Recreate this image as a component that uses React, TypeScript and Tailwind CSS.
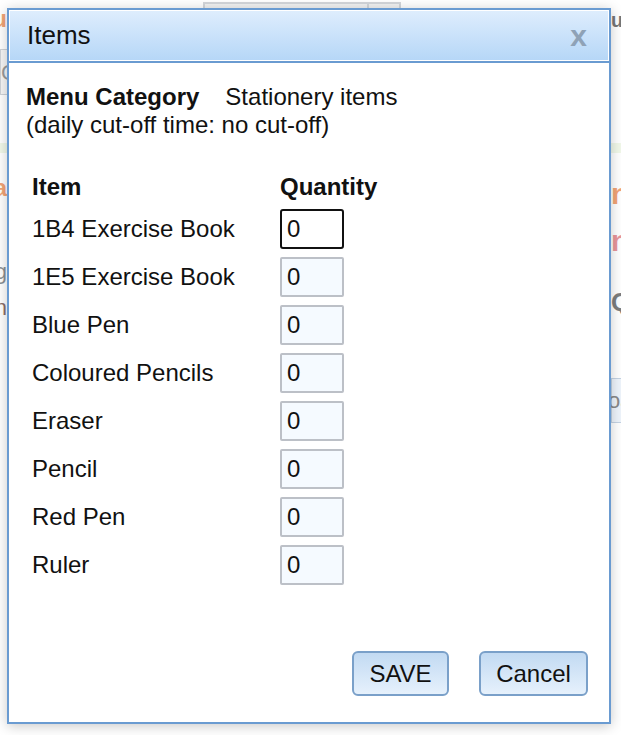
import React from 'react';

const items = [
  '1B4 Exercise Book',
  '1E5 Exercise Book',
  'Blue Pen',
  'Coloured Pencils',
  'Eraser',
  'Pencil',
  'Red Pen',
  'Ruler',
];

const font = { fontFamily: '"Liberation Sans", Arial, sans-serif' };

function PageBehind() {
  return (
    <div className="flex h-full w-full">
      {/* left edge of the page */}
      <div className="flex w-[7px] shrink-0 flex-col items-end overflow-hidden">
        <div className="flex h-[38px] items-center whitespace-nowrap text-[24px] font-bold leading-none text-[#f2a476]">
          Menu
        </div>
        <div className="mt-[11px] flex h-[46px] w-[40px] shrink-0 items-center self-start border border-[#cfd3d8] bg-[#f6f6f6] text-[22px] text-[#9a9a9a]">
          C
        </div>
        <div className="mt-[48px] h-[10px] w-full shrink-0 bg-[#f1f8e9]" />
        <div className="mt-[20px] flex h-[30px] items-center whitespace-nowrap text-[24px] font-bold text-[#f2a476]">
          Ca
        </div>
        <div className="mt-[53px] flex h-[30px] items-center whitespace-nowrap text-[22px] text-[#8b8f94]">
          Categ
        </div>
        <div className="mt-[6px] flex h-[30px] items-center whitespace-nowrap text-[22px] text-[#8b6e6a]">
          Min
        </div>
      </div>

      {/* middle, mostly covered by the dialog */}
      <div className="flex-1">
        <div className="ml-[196px] mt-[2px] flex h-[30px] w-[198px] border-2 border-[#d3d6da] bg-[#f2f2f2]">
          <div className="flex-1" />
          <div className="w-[32px] border-l-2 border-[#d3d6da]" />
        </div>
      </div>

      {/* right edge of the page */}
      <div className="flex w-[10px] shrink-0 flex-col items-start overflow-hidden">
        <div className="flex h-[40px] items-center whitespace-nowrap text-[20px] font-bold text-[#777]">ub</div>
        <div className="mt-[103px] h-[10px] w-full shrink-0 bg-[#f1f8e9]" />
        <div className="mt-[25px] flex h-[30px] items-center whitespace-nowrap text-[30px] font-bold text-[#f2a476]">
          nce
        </div>
        <div className="mt-[17px] flex h-[30px] items-center whitespace-nowrap text-[30px] font-bold text-[#e8959a]">
          nu
        </div>
        <div className="mt-[32px] flex h-[30px] items-center whitespace-nowrap text-[26px] font-bold text-[#7d7d7d]">
          Qu
        </div>
        <div className="mt-[61px] flex h-[45px] w-[60px] shrink-0 items-center border border-[#c5d3e3] bg-[#eef4fb] text-[22px] text-[#8a8a8a]">
          <span className="-ml-[4px]">oa</span>
        </div>
      </div>
    </div>
  );
}

export default function App() {
  return (
    <div className="relative h-[735px] w-[621px] overflow-hidden bg-white" style={font}>
      <PageBehind />

      <div className="absolute left-[7px] top-[8px] flex h-[716px] w-[604px] flex-col border-2 border-[#6a9bd1] bg-white text-[#111] shadow-[0_2px_12px_rgba(0,0,0,0.22)]">
        <div className="border-b-2 border-[#6a9bd1]">
          <div className="flex h-[51px] items-center justify-between border border-white bg-linear-to-b from-[#deedfd] to-[#b6d7f7] pl-[17px] pr-[21px]">
            <span className="text-[26px]">Items</span>
            <span className="text-[30px] font-bold leading-none text-[#8fa2b6]">x</span>
          </div>
        </div>

        <div className="flex-1 px-[17px] pt-[20px] text-[24px] leading-[28px]">
          <div>
            <span className="font-bold">Menu Category</span>
            <span className="ml-[26px]">Stationery items</span>
          </div>
          <div>(daily cut-off time: no cut-off)</div>

          <div className="mt-[30px] grid grid-cols-[254px_auto]">
            <div className="flex h-[36px] items-center pl-[6px] font-bold">Item</div>
            <div className="flex h-[36px] items-center font-bold">Quantity</div>
            {items.map((name, i) => (
              <React.Fragment key={name}>
                <div className="flex h-[48px] items-center pl-[6px]">{name}</div>
                <div className="flex h-[48px] items-center">
                  <input
                    defaultValue="0"
                    className={
                      i === 0
                        ? 'h-[40px] w-[64px] rounded-[3px] border-2 border-[#111] bg-white px-[5px] text-[24px] outline-none'
                        : 'h-[40px] w-[64px] rounded-[2px] border-2 border-[#bcc0c7] bg-[#f5faff] px-[5px] text-[24px] outline-none'
                    }
                  />
                </div>
              </React.Fragment>
            ))}
          </div>
        </div>

        <div className="flex justify-end gap-[30px] pb-[26px] pr-[21px]">
          <button className="h-[45px] w-[97px] rounded-[6px] border-2 border-[#7aa0c9] bg-linear-to-b from-[#c2daf2] to-[#e6f1fc] text-[24px] text-[#111]">
            SAVE
          </button>
          <button className="h-[45px] w-[109px] rounded-[6px] border-2 border-[#7aa0c9] bg-linear-to-b from-[#c2daf2] to-[#e6f1fc] text-[24px] text-[#111]">
            Cancel
          </button>
        </div>
      </div>
    </div>
  );
}
